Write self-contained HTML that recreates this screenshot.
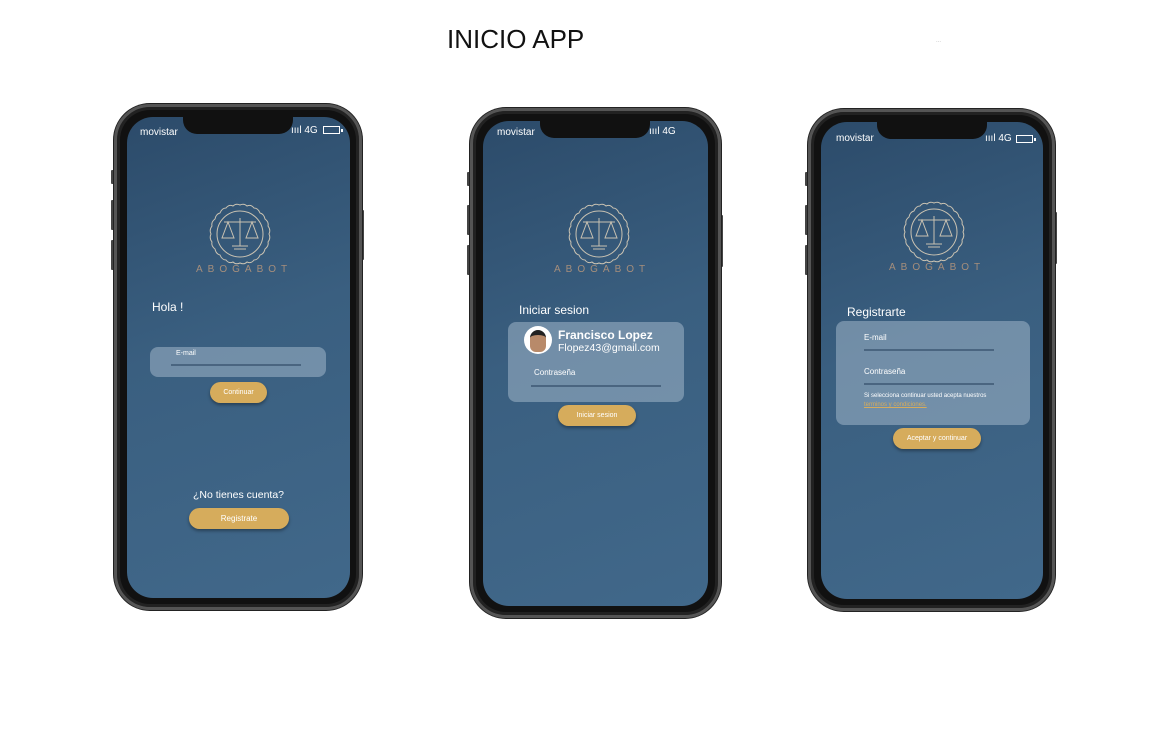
<!DOCTYPE html><html><head><meta charset="utf-8"><style>
*{margin:0;padding:0;box-sizing:border-box}
body{width:1149px;height:729px;background:#fff;position:relative;overflow:hidden;font-family:"Liberation Sans",sans-serif}
.a{position:absolute}
.ph{position:absolute;background:#111;border:3px solid #555;box-shadow:0 0 0 1px #222,inset 0 0 0 3px #222}
.sc{position:absolute;background:linear-gradient(160deg,#2c4b6a 0%,#3a5f80 45%,#41688a 100%);overflow:hidden}
.notch{position:absolute;background:#111;border-radius:0 0 14px 14px;height:17px;width:110px;top:0}
.t{position:absolute;color:#fff;white-space:nowrap}
.btn{position:absolute;background:#d6ac5c;border-radius:12px;color:#fff;font-size:7px;text-align:center;box-shadow:0 2px 3px rgba(0,0,0,.35)}
.card{position:absolute;background:rgba(170,190,208,.5);border-radius:8px}
.ln{position:absolute;height:2px;background:#4a6580}
.brand{position:absolute;color:#a58e7c;font-size:10px;letter-spacing:5px;white-space:nowrap}
.side{position:absolute;width:3px;background:#444;border-radius:1px}
.bat{position:absolute;width:17px;height:8px;border:1.5px solid #fff}
.bat:after{content:"";position:absolute;right:-4px;top:1.5px;width:2px;height:3px;background:#fff}
</style></head><body>
<div class="t" style="left:447px;top:24px;font-size:26px;color:#111">INICIO APP</div>
<div class="t" style="left:936px;top:38px;font-size:6px;color:#bbb">...</div>

<!-- phone 1 -->
<div class="side" style="left:111px;top:170px;height:14px"></div>
<div class="side" style="left:111px;top:200px;height:30px"></div>
<div class="side" style="left:111px;top:240px;height:30px"></div>
<div class="side" style="left:361px;top:210px;height:50px"></div>
<div class="ph" style="left:114px;top:104px;width:248px;height:506px;border-radius:36px"></div>
<div class="sc" style="left:127px;top:117px;width:223px;height:481px;border-radius:26px">
 <div class="notch" style="left:56px"></div>
 <div class="t" style="left:13px;top:10px;font-size:10px">movistar</div>
 <div class="t" style="left:164px;top:8px;font-size:10px">ıııl 4G</div>
 <div class="bat" style="left:196px;top:9px"></div>
 <div class="t" style="left:25px;top:183px;font-size:12px">Hola !</div>
 <div class="card" style="left:23px;top:230px;width:176px;height:30px"></div>
 <div class="t" style="left:49px;top:233px;font-size:7px">E-mail</div>
 <div class="ln" style="left:44px;top:247px;width:130px"></div>
 <div class="btn" style="left:83px;top:265px;width:57px;height:21px;line-height:21px">Continuar</div>
 <div class="t" style="left:0;width:223px;text-align:center;top:372px;font-size:10.5px">¿No tienes cuenta?</div>
 <div class="btn" style="left:62px;top:391px;width:100px;height:21px;line-height:21px;font-size:8px">Registrate</div>
</div>

<!-- phone 2 -->
<div class="side" style="left:467px;top:172px;height:14px"></div>
<div class="side" style="left:467px;top:205px;height:30px"></div>
<div class="side" style="left:467px;top:245px;height:30px"></div>
<div class="side" style="left:720px;top:215px;height:52px"></div>
<div class="ph" style="left:470px;top:108px;width:251px;height:510px;border-radius:36px"></div>
<div class="sc" style="left:483px;top:121px;width:225px;height:485px;border-radius:26px">
 <div class="notch" style="left:57px"></div>
 <div class="t" style="left:14px;top:6px;font-size:10px">movistar</div>
 <div class="t" style="left:166px;top:5px;font-size:10px">ıııl 4G</div>
 <div class="t" style="left:36px;top:182px;font-size:12px">Iniciar sesion</div>
 <div class="card" style="left:25px;top:201px;width:176px;height:80px"></div>
 <div class="a" style="left:41px;top:205px;width:28px;height:28px;border-radius:50%;background:#fff;overflow:hidden"><div class="a" style="left:6px;top:4px;width:16px;height:22px;border-radius:8px 8px 6px 6px;background:#b88a6a;border-top:5px solid #222"></div></div>
 <div class="t" style="left:75px;top:207px;font-size:12px;font-weight:bold">Francisco Lopez</div>
 <div class="t" style="left:75px;top:221px;font-size:10.5px">Flopez43@gmail.com</div>
 <div class="t" style="left:51px;top:247px;font-size:8px">Contraseña</div>
 <div class="ln" style="left:48px;top:264px;width:130px"></div>
 <div class="btn" style="left:75px;top:284px;width:78px;height:21px;line-height:21px">Iniciar sesion</div>
</div>

<!-- phone 3 -->
<div class="side" style="left:805px;top:172px;height:14px"></div>
<div class="side" style="left:805px;top:205px;height:30px"></div>
<div class="side" style="left:805px;top:245px;height:30px"></div>
<div class="side" style="left:1054px;top:212px;height:52px"></div>
<div class="ph" style="left:808px;top:109px;width:247px;height:502px;border-radius:36px"></div>
<div class="sc" style="left:821px;top:122px;width:222px;height:477px;border-radius:26px">
 <div class="notch" style="left:56px"></div>
 <div class="t" style="left:15px;top:11px;font-size:10px">movistar</div>
 <div class="t" style="left:164px;top:11px;font-size:10px">ıııl 4G</div>
 <div class="bat" style="left:195px;top:13px"></div>
 <div class="t" style="left:26px;top:183px;font-size:12px">Registrarte</div>
 <div class="card" style="left:15px;top:199px;width:194px;height:104px"></div>
 <div class="t" style="left:43px;top:211px;font-size:8px">E-mail</div>
 <div class="ln" style="left:43px;top:227px;width:130px"></div>
 <div class="t" style="left:43px;top:245px;font-size:8px">Contraseña</div>
 <div class="ln" style="left:43px;top:261px;width:130px"></div>
 <div class="t" style="left:43px;top:271px;font-size:6px">Si selecciona continuar usted acepta nuestros</div>
 <div class="t" style="left:43px;top:280px;font-size:6px;color:#d6ac5c;text-decoration:underline">terminos y condiciones.</div>
 <div class="btn" style="left:72px;top:306px;width:88px;height:21px;line-height:21px">Aceptar y continuar</div>
</div>

<!-- logos -->
<svg class="a" style="left:0;top:0" width="1149" height="729">
<defs><g id="lg" fill="none" stroke="#c9c2b2" stroke-width="1">
 <path d="M0,-29 Q4,-31 7,-28 Q11,-30 14,-26 Q18,-26 20,-21 Q24,-20 25,-15 Q29,-12 28,-8 Q31,-4 29,0 Q31,4 28,8 Q29,12 25,15 Q24,20 20,21 Q18,26 14,26 Q11,30 7,28 Q4,31 0,29 Q-4,31 -7,28 Q-11,30 -14,26 Q-18,26 -20,21 Q-24,20 -25,15 Q-29,12 -28,8 Q-31,4 -29,0 Q-31,-4 -28,-8 Q-29,-12 -25,-15 Q-24,-20 -20,-21 Q-18,-26 -14,-26 Q-11,-30 -7,-28 Q-4,-31 0,-29Z"/>
 <circle r="23"/>
 <path d="M0,-16 V12 M-8,12 H8 M-6,15 H6 M-16,-12 H16 M-12,-12 L-18,4 H-6 Z M12,-12 L6,4 H18 Z"/>
</g></defs>
<use href="#lg" x="240" y="234"/>
<use href="#lg" x="599" y="234"/>
<use href="#lg" x="934" y="232"/>
</svg>
<div class="brand" style="left:196px;top:264px">ABOGABOT</div>
<div class="brand" style="left:554px;top:264px">ABOGABOT</div>
<div class="brand" style="left:889px;top:262px">ABOGABOT</div>
</body></html>
